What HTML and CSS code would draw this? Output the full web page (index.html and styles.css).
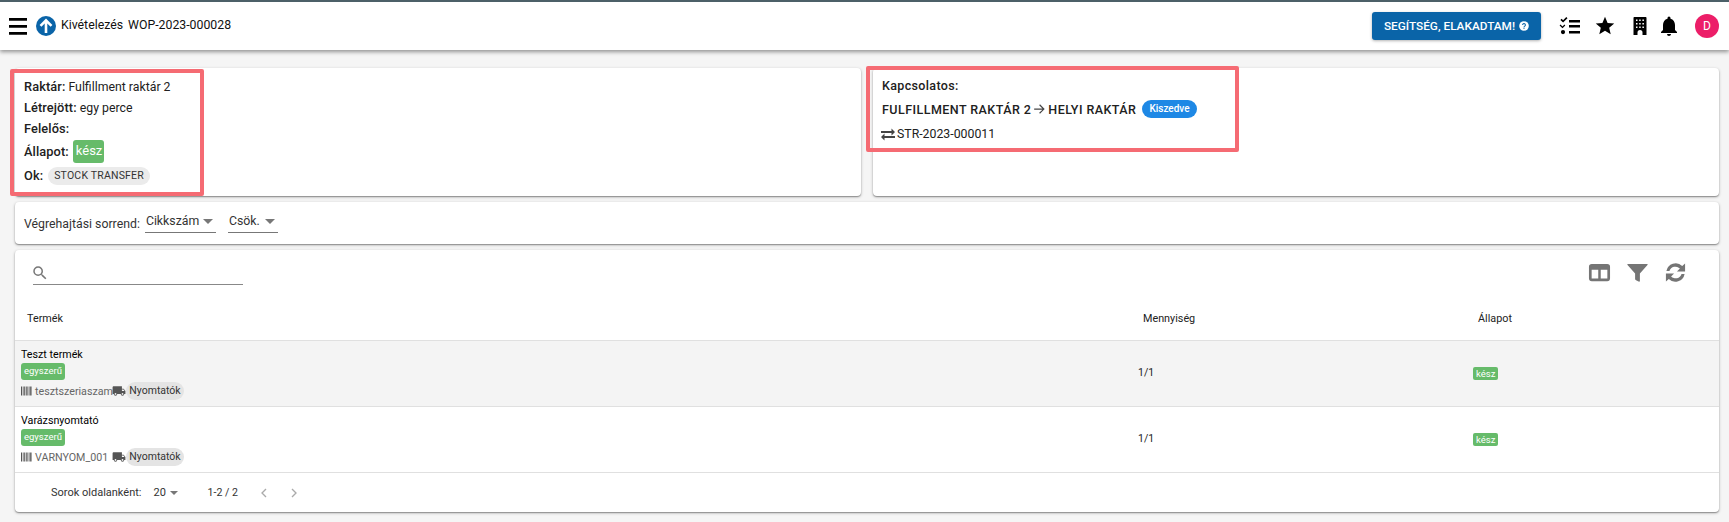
FILE: index.html
```html
<!DOCTYPE html>
<html lang="hu">
<head>
<meta charset="utf-8">
<title>Kivételezés WOP-2023-000028</title>
<link rel="stylesheet" href="styles.css">
</head>
<body>
<header class="appbar">
  <svg class="menu-icon" viewBox="0 0 18 17"><path d="M0 0h18v2.800H0zM0 7h18v2.800H0zM0 14h18v2.800H0z"/></svg>
  <svg class="logo" viewBox="0 0 20 20"><circle cx="10" cy="10" r="10" fill="#0a64a8"/><path d="M10 17V4.500M4.500 9.800L10 4.300l5.500 5.500" fill="none" stroke="#fff" stroke-width="2.600"/></svg>
  <span class="title">Kivételezés</span>
  <span class="title title-id">WOP-2023-000028</span>
  <div class="appbar-right">
    <button class="help-btn">SEGÍTSÉG, ELAKADTAM!
      <svg class="help-icon" viewBox="0 0 24 24"><circle cx="12" cy="12" r="11.500" fill="#fff"/><path d="M8.700 9.500a3.300 3.300 0 1 1 5 2.800c-1 .6-1.700 1.200-1.700 2.400" fill="none" stroke="#0a64a8" stroke-width="2.600"/><rect x="10.700" y="16.200" width="2.600" height="2.600" fill="#0a64a8"/></svg>
    </button>
    <div class="top-icons">
      <svg class="top-icon" viewBox="0 0 24 24"><path d="M11 6h11v2.400H11zM11 11h11v2.400H11zM11 17h11v2.400H11zM5.100 8.600 2.400 5.900l1.200-1.200 1.500 1.500L8.300 3l1.200 1.200zM2.500 10.500l2 2 1.900-1.900.9.900-2.800 2.800-2.900-2.900zM5 16a2.100 2.100 0 1 1 0 4.200A2.100 2.100 0 0 1 5 16z"/></svg>
      <svg class="top-icon" viewBox="-1 -1 26 26"><path d="M12 17.270 18.180 21l-1.640-7.030L22 9.240l-7.190-.61L12 2 9.190 8.630 2 9.240l5.460 4.730L5.820 21z"/></svg>
      <svg class="top-icon" viewBox="0 0 24 24"><path fill-rule="evenodd" d="M6.500 3h11c.6 0 1 .4 1 1v17h-4v-2.500a2.500 2.500 0 0 0-5 0V21h-4V4c0-.6.400-1 1-1zM8 5.500v1.500h1.500V5.500zm3.200 0v1.500h1.500V5.500zm3.200 0v1.500h1.500V5.500zM8 9v1.500h1.500V9zm3.200 0v1.500h1.500V9zm3.200 0v1.500h1.500V9zM8 12.500V14h1.500v-1.500zm3.200 0V14h1.500v-1.500zm3.200 0V14h1.500v-1.500z"/></svg>
      <svg class="top-icon bell" viewBox="0 0 24 24"><path d="M12 22c1.100 0 2-.9 2-2h-4a2 2 0 0 0 2 2zm6-6v-5c0-3.070-1.630-5.640-4.500-6.320V4a1.500 1.500 0 0 0-3 0v.68C7.640 5.360 6 7.920 6 11v5l-2 2v1h16v-1l-2-2z"/></svg>
    </div>
    <div class="avatar">D</div>
  </div>
</header>

<main class="content">
  <section class="info-row">
    <div class="card info-card">
      <div class="info-line"><b>Raktár:</b> Fulfillment raktár 2</div>
      <div class="info-line"><b>Létrejött:</b> egy perce</div>
      <div class="info-line"><b>Felelős:</b></div>
      <div class="info-line status-line"><b>Állapot:</b> <span class="badge-big">kész</span></div>
      <div class="info-line reason-line"><b>Ok:</b> <span class="chip chip-upper">STOCK TRANSFER</span></div>
    </div>
    <div class="card info-card related">
      <div class="rel-head"><b>Kapcsolatos:</b></div>
      <div class="rel-route"><b>FULFILLMENT RAKTÁR 2</b>
        <svg class="arrow" viewBox="0 0 24 24"><path d="M12 4l-1.410 1.410L16.170 11H2v2.400h14.170l-5.580 5.190L12 20l8-8z"/></svg>
        <b>HELYI RAKTÁR</b>
        <span class="pill-blue">Kiszedve</span></div>
      <div class="rel-id">
        <svg class="swap" viewBox="0 0 14 14"><path d="M0 3.500h10.500V1L14 4.500 10.500 8V5.500H0zM14 8.500H3.500V6L0 9.500 3.500 13v-2.500H14z" transform="translate(0 .4)"/></svg>
        STR-2023-000011</div>
    </div>
  </section>

  <section class="card order-bar">
    <span class="order-label">Végrehajtási sorrend:</span>
    <span class="select sel-a">Cikkszám<i class="caret"></i></span>
    <span class="select sel-b">Csök.<i class="caret"></i></span>
  </section>

  <section class="card table-card">
    <div class="toolbar">
      <div class="search">
        <svg class="search-icon" viewBox="0 0 24 24"><path d="M15.500 14h-.79l-.28-.27A6.470 6.470 0 0 0 16 9.500 6.500 6.500 0 1 0 9.500 16c1.610 0 3.090-.59 4.230-1.570l.27.28v.79l5 4.990L20.490 19l-4.990-5zm-6 0C7.010 14 5 11.990 5 9.500S7.010 5 9.500 5 14 7.010 14 9.500 11.990 14 9.500 14z"/></svg>
      </div>
      <div class="tools">
        <svg class="tool" viewBox="0 0 24 24"><path d="M4 3h16a3 3 0 0 1 3 3v12a3 3 0 0 1-3 3H4a3 3 0 0 1-3-3V6a3 3 0 0 1 3-3zm-.2 6v9.200h6.900V9zm9.500 0v9.200h6.900V9z" fill-rule="evenodd"/></svg>
        <svg class="tool" viewBox="0 0 24 24"><path d="M2 3h20c.6 0 .8.7.4 1.200L14.500 13v7.500c0 .8-.7 1.300-1.400 1l-2.600-1.300c-.6-.3-1-.8-1-1.500V13L1.600 4.200C1.200 3.700 1.400 3 2 3z"/></svg>
        <svg class="tool" viewBox="0 0 24 24"><path d="M2.500 10.500A9.800 9.800 0 0 1 19 5.300L22 2.500V11h-8.500l3.100-3.100A6.500 6.500 0 0 0 5.700 10.500zM21.500 13.500A9.800 9.800 0 0 1 5 18.700L2 21.500V13h8.500l-3.100 3.100a6.500 6.500 0 0 0 10.900-2.600z"/></svg>
      </div>
    </div>
    <div class="thead row-grid">
      <div class="th th-product">Termék</div>
      <div class="th">Mennyiség</div>
      <div class="th">Állapot</div>
    </div>
    <div class="tr tr-hover row-grid">
      <div class="td-product">
        <div class="p-name">Teszt termék</div>
        <span class="badge-small">egyszerű</span>
        <div class="p-meta">
          <svg class="barcode" viewBox="0 0 12 10"><path d="M0 0h1.200v10H0zM2 0h.8v10H2zM3.500 0h1.200v10H3.500zM5.500 0h.8v10h-.8zM7 0h.8v10H7zM8.500 0h.8v10h-.8zM10 0h1.500v10H10z"/></svg>
          <span class="sku">tesztszeriaszam</span>
          <svg class="truck" viewBox="0 0 24 24"><path d="M20 8h-3V4H3c-1.100 0-2 .9-2 2v11h2a3 3 0 0 0 6 0h6a3 3 0 0 0 6 0h2v-5l-3-4zM6 18.500a1.500 1.500 0 1 1 0-3 1.500 1.500 0 0 1 0 3zm13.500-9 2 2.500H17V9.500h2.500zM18 18.500a1.500 1.500 0 1 1 0-3 1.500 1.500 0 0 1 0 3z"/></svg>
          <span class="chip chip-row">Nyomtatók</span>
        </div>
      </div>
      <div class="td-qty">1/1</div>
      <div class="td-status"><span class="badge-status">kész</span></div>
    </div>
    <div class="tr row-grid">
      <div class="td-product">
        <div class="p-name">Varázsnyomtató</div>
        <span class="badge-small">egyszerű</span>
        <div class="p-meta">
          <svg class="barcode" viewBox="0 0 12 10"><path d="M0 0h1.200v10H0zM2 0h.8v10H2zM3.500 0h1.200v10H3.500zM5.500 0h.8v10h-.8zM7 0h.8v10H7zM8.500 0h.8v10h-.8zM10 0h1.500v10H10z"/></svg>
          <span class="sku">VARNYOM_001</span>
          <svg class="truck" viewBox="0 0 24 24"><path d="M20 8h-3V4H3c-1.100 0-2 .9-2 2v11h2a3 3 0 0 0 6 0h6a3 3 0 0 0 6 0h2v-5l-3-4zM6 18.500a1.500 1.500 0 1 1 0-3 1.500 1.500 0 0 1 0 3zm13.500-9 2 2.500H17V9.500h2.500zM18 18.500a1.500 1.500 0 1 1 0-3 1.500 1.500 0 0 1 0 3z"/></svg>
          <span class="chip chip-row">Nyomtatók</span>
        </div>
      </div>
      <div class="td-qty">1/1</div>
      <div class="td-status"><span class="badge-status">kész</span></div>
    </div>
    <div class="pager">
      <span class="pager-label">Sorok oldalanként:</span>
      <span class="pager-size">20<i class="caret"></i></span>
      <span class="pager-range">1-2 / 2</span>
      <svg class="pager-nav" viewBox="0 0 24 24"><path d="M15 6l-6 6 6 6" fill="none" stroke="#aaa" stroke-width="2"/></svg>
      <svg class="pager-nav" viewBox="0 0 24 24"><path d="M9 6l6 6-6 6" fill="none" stroke="#aaa" stroke-width="2"/></svg>
    </div>
  </section>
</main>

<div class="mark mark-a"></div>
<div class="mark mark-b"></div>
</body>
</html>
```

FILE: styles.css
```css
* { box-sizing: border-box; }
html, body { margin: 0; padding: 0; }
body {
  width: 1729px;
  height: 522px;
  overflow: hidden;
  background: #f5f5f5;
  font-family: Roboto, "Liberation Sans", sans-serif;
  font-size: 12.300px;
  color: #212121;
  position: relative;
}
b { font-weight: 500; font-size: 12.800px; letter-spacing: .1px; }

.appbar {
  height: 50px;
  background: #fff;
  border-top: 2px solid #4c6068;
  box-shadow: 0 2px 4px rgba(0,0,0,.4);
  display: flex;
  align-items: center;
  padding: 0 10px 0 9px;
  position: relative;
}
.menu-icon { width: 18px; height: 17px; margin-right: 9px; }
.logo { width: 20px; height: 20px; margin-right: 5px; }
.title { font-size: 12.300px; color: #111; margin: 0 5px 2px 0; }
.title-id { margin-right: 0; }
.appbar-right { margin-left: auto; display: flex; align-items: center; }
.help-btn {
  width: 169px; height: 28px;
  border: 0; border-radius: 3px;
  background: #0a64a8; color: #fff;
  font: 500 11.800px Roboto, sans-serif;
  display: flex; align-items: center; justify-content: center; gap: 4px;
  box-shadow: 0 1px 3px rgba(0,0,0,.3);
  margin-right: 17px;
  padding: 0;
}
.help-icon { width: 10px; height: 10px; }
.top-icons { display: flex; gap: 11px; margin-right: 14px; }
.top-icon { width: 24px; height: 24px; }
.bell { margin-left: -6px; }
.avatar {
  width: 24px; height: 24px; border-radius: 50%;
  background: #ec1e68; color: #fff;
  font-size: 12px; display: flex; align-items: center; justify-content: center;
}

.content { padding: 18px 10px 0 15px; display: flex; flex-direction: column; gap: 6px; }
.card { background: #fff; border-radius: 4px; box-shadow: 0 1px 3px rgba(0,0,0,.3), 0 1px 1px rgba(0,0,0,.25); }
.info-row { display: flex; gap: 12px; }
.info-card { flex: 1 1 0; height: 128px; padding: 8px 9px; line-height: 21px; }
.info-line { height: 21px; white-space: nowrap; }
.status-line { height: 24px; display: flex; align-items: center; gap: 4px; }
.reason-line { height: 21px; margin-top: 2px; display: flex; align-items: center; gap: 5px; }
.badge-big { background: #66bb6a; color: #fff; border-radius: 3px; font-size: 13px; padding: 0 3px; height: 23px; line-height: 22px; width: 31px; }
.chip { background: #ebebeb; border-radius: 9px; height: 18px; line-height: 17px; padding: 0 6px; font-size: 10.500px; color: #333; display: inline-block; }
.chip-upper { letter-spacing: .2px; }
.chip-row { background: #e4e4e4; font-size: 10.500px; padding: 0; width: 58px; text-align: center; }

.related { padding: 8px 9px; }
.rel-head { height: 23px; line-height: 20px; }
.rel-head b { font-size: 12.500px; letter-spacing: .35px; }
.rel-route { display: flex; align-items: center; height: 20px; white-space: nowrap; }
.rel-route b { font-size: 12.500px; letter-spacing: .45px; }
.arrow { width: 14px; height: 14px; margin: 0 1px 0 2px; fill: #444; }
.pill-blue { background: #1e88e5; color: #fff; border-radius: 9px; height: 18px; line-height: 18px; padding: 0 7px; font-size: 10px; font-weight: 500; margin-left: 6px; letter-spacing: 0; }
.rel-id { display: flex; align-items: center; gap: 2px; margin-top: 5px; height: 20px; margin-left: -1px; }
.swap { width: 14px; height: 14px; fill: #444; }

.order-bar { height: 42px; display: flex; align-items: center; padding-left: 9px; }
.order-label { margin-right: 5px; padding-top: 2px; color: #333; }
.select { display: inline-flex; align-items: center; justify-content: space-between; height: 20px; border-bottom: 1px solid #777; color: #333; padding: 0 3px 3px 1px; }
.sel-a { width: 71px; margin-right: 12px; }
.sel-b { width: 50px; }
.caret { display: inline-block; width: 0; height: 0; border-left: 5px solid transparent; border-right: 5px solid transparent; border-top: 5px solid #777; margin-left: 4px; }

.table-card { height: 262px; }
.toolbar { height: 57px; padding: 0 0 0 18px; display: flex; justify-content: space-between; position: relative; }
.search { width: 210px; height: 25px; margin-top: 10px; border-bottom: 1px solid #888; }
.search-icon { width: 18px; height: 18px; fill: #777; display: block; margin: 4px 0 0 -2px; }
.tools { display: flex; gap: 15px; padding: 11px 32px 0 0; }
.tool { width: 23px; height: 23px; fill: #757575; }

.row-grid { display: grid; grid-template-columns: 1128px 335px 1fr; }
.thead { height: 34px; border-bottom: 1px solid #e0e0e0; align-items: start; }
.th { font-size: 10.800px; color: #222; line-height: 14px; padding-top: 5px; }
.th-product { padding-left: 12px; }
.tr { height: 66px; border-bottom: 1px solid #e0e0e0; align-items: center; }
.tr-hover { background: #f4f4f4; }
.td-product { padding: 7px 0 0 6px; height: 66px; }
.p-name { font-size: 10.700px; line-height: 14px; color: #000; font-weight: 400; }
.badge-small { display: inline-block; background: #66bb6a; color: #fff; border-radius: 3px; font-size: 9.500px; line-height: 14px; height: 17px; padding: 1px 3px; vertical-align: top; margin-top: 1px; }
.badge-status { display: inline-block; background: #66bb6a; color: #fff; border-radius: 2px; font-size: 9.500px; line-height: 13px; height: 13px; padding: 0 3px; }
.p-meta { display: flex; align-items: center; height: 18px; margin-top: 2px; }
.barcode { width: 11px; height: 10px; fill: #555; margin-right: 3px; }
.sku { font-size: 10.700px; color: #666; white-space: nowrap; width: 77px; }
.truck { width: 14px; height: 14px; fill: #555; }
.td-qty { font-size: 10.500px; margin: 0 0 3px -5px; color: #222; }
.td-status { margin: 0 0 3px -5px; }
.pager { height: 39px; display: flex; align-items: center; padding-left: 36px; font-size: 11px; color: #333; }
.pager-label { margin-right: 12px; }
.pager-size { width: 28px; margin-right: 26px; display: inline-flex; align-items: center; font-size: 11px; }
.pager-size .caret { border-left-width: 4px; border-right-width: 4px; border-top-width: 4px; }
.pager-range { margin-right: 18px; font-size: 10.600px; }
.pager-nav { width: 16px; height: 16px; margin-right: 14px; }

.mark { position: absolute; border: 4px solid #f56b73; border-radius: 2px; pointer-events: none; }
.mark-a { left: 10px; top: 69px; width: 194px; height: 127px; }
.mark-b { left: 866px; top: 66px; width: 373px; height: 86px; }
```
